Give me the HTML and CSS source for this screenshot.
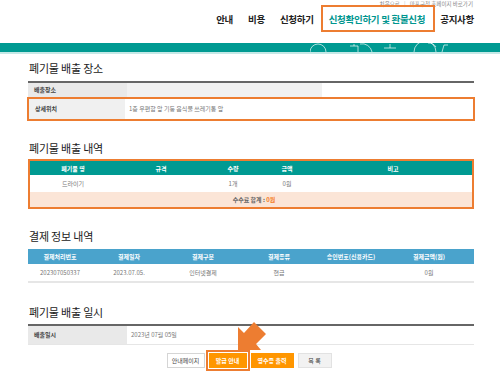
FILE: index.html
```html
<!DOCTYPE HTML>
<html>
<head>
<meta charset="utf-8">
<link rel="stylesheet" href="styles.css">
</head>
<body>
<div class="page">
<!--header-->
<div class="top">
  <div class="util">처음으로 <span class="bar">|</span> 마포구청 홈페이지 바로가기</div>
  <div class="gnb">
    <a>안내</a>
    <a>비용</a>
    <a>신청하기</a>
    <a class="on mark">신청확인하기 및 환불신청</a>
    <a>공지사항</a>
  </div>
</div>
<div class="band">
  <svg class="deco" width="160" height="9" viewBox="0 0 160 9">
    <path d="M0 9 A8 8 0 0 1 16 9" fill="none" stroke="#fff" stroke-width="0.8" opacity="0.85"/>
    <path d="M40 3 L48 3 L48 9 M44 1 L44 3" fill="none" stroke="#fff" stroke-width="0.8" opacity="0.85"/>
    <path d="M50 1 A10 10 0 0 1 62 9" fill="none" stroke="#fff" stroke-width="0.8" opacity="0.85"/>
    <path d="M74 5 L86 5 M80 1 L80 5" fill="none" stroke="#fff" stroke-width="0.8" opacity="0.85"/>
    <path d="M104 9 A11 11 0 0 1 126 9 M118 0 A9 9 0 0 1 126 4" fill="none" stroke="#fff" stroke-width="0.8" opacity="0.85"/>
    <path d="M132 9 L134 2 L138 2" fill="none" stroke="#fff" stroke-width="0.8" opacity="0.85"/>
  </svg>
</div>

<!--begin content-->
<div class="content">

<h2>폐기물 배출 장소</h2>
<div class="info">
  <div class="row"><div class="th">배출장소</div><div class="td"><span class="blank"></span></div></div>
  <div class="row tall mark-row"><div class="th">상세위치</div><div class="td">1층 우편함 앞 기둥 음식물 쓰레기통 앞</div></div>
</div>

<h2 class="gap">폐기물 배출 내역</h2>
<table class="list teal mark-table">
  <tr class="head"><td class="c1">폐기물 명</td><td class="c2">규격</td><td class="c3">수량</td><td class="c4">금액</td><td>비고</td></tr>
  <tr class="data"><td>드라이기</td><td></td><td>1개</td><td>0원</td><td></td></tr>
  <tr class="total"><td colspan="5">수수료 합계 : <span class="won">0원</span></td></tr>
</table>

<h2 class="gap">결제 정보 내역</h2>
<table class="list blue">
  <tr class="head"><td class="p1">결제처리번호</td><td class="p2">결제일자</td><td class="p3">결제구분</td><td class="p4">결제종류</td><td class="p5">승인번호(신용카드)</td><td>결제금액(원)</td></tr>
  <tr class="data"><td>202307050337</td><td>2023.07.05.</td><td>인터넷결제</td><td>현금</td><td></td><td>0원</td></tr>
</table>

<h2 class="gap last">폐기물 배출 일시</h2>
<div class="info">
  <div class="row date"><div class="th">배출일시</div><div class="td">2023년 07월 05일</div></div>
</div>

<div class="btns">
  <a class="btn">안내페이지</a>
  <a class="btn org mark">발급 안내</a>
  <a class="btn org wide">영수증 출력</a>
  <a class="btn gray">목 록</a>
</div>

</div>
<!--end content-->

<svg class="arrow" width="45" height="45" viewBox="0 0 45 45">
  <polygon points="8,35 8,12 14,18 24,7 36,19 26,29 31,35" fill="#ed7d31"/>
</svg>
</div>
</body>
</html>
```

FILE: styles.css
```css
body
{
  margin: 0;
  font-family: "Noto Sans CJK KR", "Noto Sans", sans-serif;
  color: #333;
  background: #fff;
}
.page
{
  position: relative;
  width: 500px;
  height: 389px;
  overflow: hidden;
}
a { color: inherit; text-decoration: none; }

/* header */
.top
{
  height: 43px;
}
.util
{
  height: 11px;
  padding-top: 0px;
  padding-right: 27px;
  text-align: right;
  font-size: 5.5px;
  line-height: 8px;
  color: #888;
}
.util .bar { color: #bbb; margin: 0 3px; }
.gnb
{
  display: flex;
  justify-content: flex-end;
  gap: 15px;
  padding-right: 26px;
  margin-top: 1px;
  font-size: 9.5px;
  font-weight: bold;
  line-height: 14px;
  letter-spacing: -0.3px;
  color: #222;
}
.gnb .on { color: #00968f; }
.mark { position: relative; }
.gnb .mark::after
{
  content: "";
  position: absolute;
  left: -8px;
  right: -10px;
  top: -7px;
  bottom: -6px;
  border: 2px solid #ed7d31;
}
.band
{
  position: relative;
  height: 9px;
  background: #009a92;
  border-bottom: 2px solid #c4e8e6;
}
.deco
{
  position: absolute;
  left: 310px;
  top: 0;
}

/* content */
.content
{
  padding: 7px 26px 0 28px;
}
h2
{
  margin: 0 0 6px 1px;
  font-size: 11px;
  line-height: 14px;
  font-weight: normal;
  letter-spacing: -0.2px;
  color: #222;
}
h2.gap { margin-top: 20px; }
h2.last { margin-top: 22px; margin-bottom: 5px; }

.info
{
  border-top: 2px solid #666;
}
.row
{
  display: flex;
  height: 14px;
  font-size: 6px;
  line-height: 14px;
}
.row .th
{
  width: 93px;
  padding-left: 6px;
  background: #e9e9e9;
  font-weight: bold;
  color: #444;
}
.row .td
{
  flex: 1;
  padding-left: 4px;
  color: #777;
}
.row .blank
{
  display: block;
  width: 195px;
  height: 14px;
  margin-left: -4px;
  background: #f1f1f1;
}
.row.tall
{
  height: 20px;
  line-height: 20px;
}
.mark-row
{
  margin: 0 -1px;
  border: 2px solid #ed7d31;
}
.mark-row .th { width: 90px; background: #f0f0f0; }
.row.date
{
  height: 18px;
  line-height: 18px;
  border-bottom: 1px solid #e6e6e6;
}

table.list
{
  width: 100%;
  border-collapse: collapse;
  font-size: 6px;
  text-align: center;
  table-layout: fixed;
}
.list td { padding: 0; }
.list .head td
{
  height: 14px;
  color: #fff;
  font-weight: bold;
}
.list .data td
{
  height: 17px;
  color: #777;
}
.teal .head td { background: #009a92; }
.mark-table
{
  border: 2px solid #ed7d31;
  margin-top: -2px;
}
.teal .c1 { width: 86px; }
.teal .c2 { width: 90px; }
.teal .c3 { width: 54px; }
.teal .c4 { width: 54px; }
.teal .total td
{
  height: 15px;
  background: #fbe5d7;
  font-weight: bold;
  color: #666;
  padding-left: 6px;
}
.total .won { color: #f57c1f; }

.blue .head td
{
  height: 15px;
  background: #4aa3cc;
}
.blue .data td { border-bottom: 2px solid #e6e6e6; }
.blue .p1 { width: 64px; }
.blue .p2 { width: 74px; }
.blue .p3 { width: 74px; }
.blue .p4 { width: 78px; }
.blue .p5 { width: 66px; }

/* buttons */
.btns
{
  display: flex;
  justify-content: center;
  gap: 4px;
  margin-top: 8px;
  padding-right: 4px;
}
.btn
{
  box-sizing: border-box;
  width: 38px;
  height: 15px;
  line-height: 13px;
  border: 1px solid #d5d5d5;
  background: #fff;
  font-size: 6px;
  text-align: center;
  color: #444;
}
.btn.org
{
  background: #ff9600;
  border-color: #ff9600;
  color: #fff;
  font-weight: bold;
}
.btn.wide { width: 43px; }
.btn.gray
{
  width: 34px;
  background: #f2f2f2;
  border-color: #e2e2e2;
}
.btns .mark::after
{
  content: "";
  position: absolute;
  left: -4px;
  right: -4px;
  top: -4px;
  bottom: -4px;
  border: 2px solid #ed7d31;
}

.arrow
{
  position: absolute;
  left: 230px;
  top: 315px;
}
```
